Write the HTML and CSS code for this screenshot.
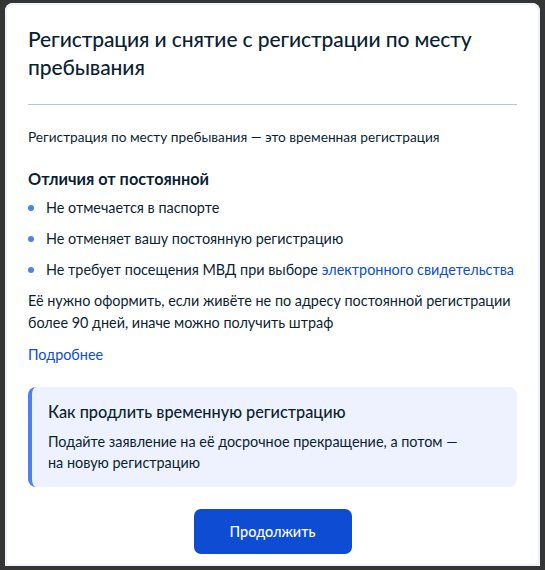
FILE: index.html
```html
<!DOCTYPE html>
<html lang="ru">
<head>
<meta charset="utf-8">
<link rel="stylesheet" href="styles.css">
</head>
<body>
<div class="card">
  <h1 class="title">Регистрация и снятие с регистрации по месту пребывания</h1>
  <hr class="divider">
  <p class="lead">Регистрация по месту пребывания — это временная регистрация</p>
  <h2 class="subtitle">Отличия от постоянной</h2>
  <ul class="list">
    <li>Не отмечается в паспорте</li>
    <li>Не отменяет вашу постоянную регистрацию</li>
    <li>Не требует посещения МВД при выборе <a class="link" href="#">электронного свидетельства</a></li>
  </ul>
  <p class="text">Её нужно оформить, если живёте не по адресу постоянной регистрации более 90 дней, иначе можно получить штраф</p>
  <a class="link more" href="#">Подробнее</a>
  <div class="callout">
    <h3 class="callout-title">Как продлить временную регистрацию</h3>
    <p class="callout-text">Подайте заявление на её досрочное прекращение, а потом —<br>на новую регистрацию</p>
  </div>
  <div class="actions">
    <button class="btn">Продолжить</button>
  </div>
</div>
</body>
</html>
```
FILE: styles.css
```css
* { box-sizing: border-box; }
html, body { margin: 0; height: 100%; }
body {
  background: #353535;
  padding: 3px 5px 4px 5px;
  font-family: Lato, "Noto Sans", sans-serif;
  color: #0b1f33;
}
.card {
  background: #fff;
  border-radius: 8px 8px 0 0;
  height: 100%;
  padding: 22px 23px 0 23px;
  box-shadow: inset 0 0 0 2px #eef2fd;
  display: flex;
  flex-direction: column;
}
.title {
  margin: 0;
  font-size: 21px;
  line-height: 28px;
  font-weight: 500;
  letter-spacing: -0.1px;
  padding-right: 30px;
}
.divider {
  border: 0;
  border-top: 1px solid #b5c2dc;
  margin: 23px 0 0 0;
}
.lead {
  margin: 22px 0 0 0;
  font-size: 13.7px;
  line-height: 20px;
}
.subtitle {
  margin: 21px 0 0 0;
  font-size: 16.3px;
  line-height: 22px;
  font-weight: 700;
}
.list {
  list-style: none;
  margin: 8px 0 0 0;
  padding: 0;
  display: flex;
  flex-direction: column;
  gap: 11px;
}
.list li {
  position: relative;
  padding-left: 18px;
  font-size: 14.4px;
  line-height: 20px;
}
.list li::before {
  content: "";
  position: absolute;
  left: 0;
  top: 7px;
  width: 6px;
  height: 6px;
  border-radius: 50%;
  background: #4e7ff5;
}
.link { color: #0d4cd3; text-decoration: none; }
.text {
  margin: 10px 0 0 0;
  font-size: 14.4px;
  line-height: 22px;
}
.more {
  margin-top: 11px;
  font-size: 14.4px;
  line-height: 20px;
  align-self: flex-start;
}
.callout {
  margin-top: 22px;
  background: #edf2fe;
  border-left: 4px solid #4e7ff5;
  border-radius: 8px;
  padding: 14px 20px 14px 16px;
}
.callout-title {
  margin: 0;
  font-size: 16.3px;
  line-height: 22px;
  font-weight: 500;
}
.callout-text {
  margin: 8px 0 0 0;
  font-size: 14.4px;
  line-height: 21px;
}
.actions {
  display: flex;
  justify-content: center;
  margin-top: 22px;
}
.btn {
  width: 158px;
  height: 45px;
  border: 0;
  border-radius: 7px;
  background: #0d4cd3;
  color: #fff;
  font-family: Lato, "Noto Sans", sans-serif;
  font-size: 14.4px;
  font-weight: 500;
}
```
